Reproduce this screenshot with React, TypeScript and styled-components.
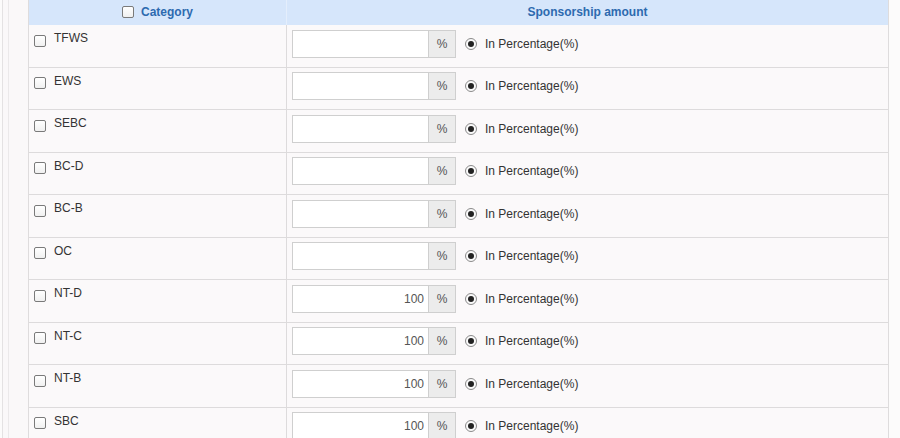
import React from "react";
import styled, { createGlobalStyle } from "styled-components";

const rows = [
  { code: "TFWS", amount: "" },
  { code: "EWS", amount: "" },
  { code: "SEBC", amount: "" },
  { code: "BC-D", amount: "" },
  { code: "BC-B", amount: "" },
  { code: "OC", amount: "" },
  { code: "NT-D", amount: "100" },
  { code: "NT-C", amount: "100" },
  { code: "NT-B", amount: "100" },
  { code: "SBC", amount: "100" },
];

export default function App() {
  return (
    <>
      <GlobalStyle />
      <Page>
        <Gutter>
          <Table>
            <HeaderRow>
              <HeaderCell divider>
                <CheckBox />
                <span>Category</span>
              </HeaderCell>
              <HeaderCell>Sponsorship amount</HeaderCell>
            </HeaderRow>
            {rows.map((r) => (
              <Row key={r.code}>
                <CategoryCell>
                  <CheckBox />
                  <Label>{r.code}</Label>
                </CategoryCell>
                <AmountCell>
                  <InputGroup>
                    <AmountInput readOnly value={r.amount} />
                    <Addon>%</Addon>
                  </InputGroup>
                  <RadioOption>
                    <Radio />
                    <span>In Percentage(%)</span>
                  </RadioOption>
                </AmountCell>
              </Row>
            ))}
          </Table>
        </Gutter>
      </Page>
    </>
  );
}

const GlobalStyle = createGlobalStyle`
  html, body {
    margin: 0;
    padding: 0;
    background: #fcfbfb;
    overflow: hidden;
  }
  body {
    font-family: "Liberation Sans", Arial, sans-serif;
    font-size: 12px;
    color: #333;
  }
`;

const Page = styled.div`
  margin-left: 2px;
  border-left: 1px solid #e4e2e3;
  background: #faf8f9;
  width: 886px;
  height: 438px;
`;

const Gutter = styled.div`
  margin-left: 5px;
  border-left: 1px solid #ebe9ea;
  padding-left: 19px;
  height: 100%;
`;

const Table = styled.div`
  width: 861px;
  box-sizing: border-box;
  border-left: 1px solid #dedcdd;
  border-right: 1px solid #dedcdd;
  background: #fbf9fa;
`;

const HeaderRow = styled.div`
  display: grid;
  grid-template-columns: 258px 1fr;
  height: 25px;
  background: #d6e6fb;
`;

const HeaderCell = styled.div<{ divider?: boolean }>`
  display: flex;
  align-items: center;
  justify-content: center;
  gap: 7px;
  font-weight: bold;
  color: #2d6aaf;
  padding-bottom: 2px;
  box-sizing: border-box;
  border-right: ${(p) => (p.divider ? "1px solid #e4eefc" : "none")};
`;

const Row = styled.div`
  display: grid;
  grid-template-columns: 258px 1fr;
  height: 42.5px;
  box-sizing: border-box;
  border-bottom: 1px solid #dddbdc;
`;

const CategoryCell = styled.div`
  display: flex;
  align-items: flex-start;
  gap: 8px;
  padding: 6px 0 0 5px;
  border-right: 1px solid #dddbdc;
  line-height: 14px;
`;

const Label = styled.span`
  color: #333;
`;

const CheckBox = styled.span`
  display: inline-block;
  flex: none;
  width: 12px;
  height: 12px;
  box-sizing: border-box;
  margin-top: 3.5px;
  border: 1.5px solid #7a7a7a;
  border-radius: 2px;
  background: linear-gradient(#fff, #f0f0f0);

  ${HeaderCell} & {
    margin-top: 1px;
  }
`;

const AmountCell = styled.div`
  display: flex;
  align-items: center;
  align-self: start;
  padding: 4.5px 0 0 5px;
  gap: 9px;
`;

const InputGroup = styled.div`
  display: flex;
  height: 28px;
`;

const AmountInput = styled.input`
  width: 136px;
  height: 28px;
  box-sizing: border-box;
  border: 1px solid #cfcfcf;
  border-right: none;
  background: #fff;
  text-align: right;
  padding: 0 4px;
  font-family: "Liberation Sans", Arial, sans-serif;
  font-size: 12px;
  color: #555;
  outline: none;
`;

const Addon = styled.span`
  display: flex;
  align-items: center;
  justify-content: center;
  width: 28px;
  box-sizing: border-box;
  border: 1px solid #cfcfcf;
  background: #ececec;
  color: #555;
`;

const RadioOption = styled.label`
  display: flex;
  align-items: center;
  gap: 8px;
  color: #333;
  margin-top: 0;
`;

const Radio = styled.span`
  position: relative;
  display: inline-block;
  width: 12px;
  height: 12px;
  box-sizing: border-box;
  border: 1.5px solid #8a8a8a;
  border-radius: 50%;
  background: #fafafa;

  &::after {
    content: "";
    position: absolute;
    left: 50%;
    top: 50%;
    width: 6px;
    height: 6px;
    margin: -3px 0 0 -3px;
    border-radius: 50%;
    background: #222;
  }
`;
